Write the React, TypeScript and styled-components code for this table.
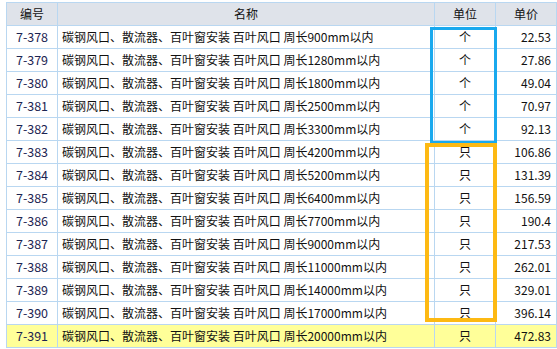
import React from 'react'
import styled, { createGlobalStyle } from 'styled-components'

const GlobalStyle = createGlobalStyle`
  body {
    margin: 0;
    background: #ffffff;
    font-family: 'Noto Sans CJK SC', 'Noto Sans', sans-serif;
  }
`

const Page = styled.div`
  width: 557px;
  height: 349px;
  padding: 2px 0 0 6px;
  box-sizing: border-box;
  overflow: hidden;
`

const Frame = styled.div`
  position: relative;
  width: 546px;
`

const Table = styled.table`
  border-collapse: collapse;
  table-layout: fixed;
  width: 546px;
  font-size: 12px;
`

const HeadCell = styled.th<{ $w: number }>`
  width: ${(p) => p.$w}px;
  height: 22px;
  padding: 0;
  background: #dfe3ea;
  border: 1px solid #b9d7f1;
  font-weight: 400;
  color: #111;
  text-align: center;
  line-height: 22px;
`

const Row = styled.tr<{ $hl?: boolean }>`
  background: ${(p) => (p.$hl ? '#ffff99' : '#ffffff')};
`

const Cell = styled.td<{ $align: 'left' | 'center' | 'right'; $code?: boolean }>`
  height: 22px;
  padding: 0 ${(p) => (p.$align === 'right' ? 5 : 4)}px;
  border: 1px solid #b9d7f1;
  text-align: ${(p) => p.$align};
  color: ${(p) => (p.$code ? '#1c2452' : '#111')};
  font-size: ${(p) => (p.$code ? 12.5 : 12)}px;
  line-height: 22px;
  white-space: nowrap;
  overflow: hidden;
`

const Mark = styled.div<{ $color: string; $w: number }>`
  position: absolute;
  box-sizing: border-box;
  border: ${(p) => p.$w}px solid ${(p) => p.$color};
  pointer-events: none;
`

const BlueMark = styled(Mark)`
  left: 424px;
  top: 25px;
  width: 67px;
  height: 117px;
`

const OrangeMark = styled(Mark)`
  left: 419px;
  top: 141px;
  width: 72px;
  height: 179px;
`

const rows: [string, string, string, string][] = [
  ['7-378', '900', '个', '22.53'],
  ['7-379', '1280', '个', '27.86'],
  ['7-380', '1800', '个', '49.04'],
  ['7-381', '2500', '个', '70.97'],
  ['7-382', '3300', '个', '92.13'],
  ['7-383', '4200', '只', '106.86'],
  ['7-384', '5200', '只', '131.39'],
  ['7-385', '6400', '只', '156.59'],
  ['7-386', '7700', '只', '190.4'],
  ['7-387', '9000', '只', '217.53'],
  ['7-388', '11000', '只', '262.01'],
  ['7-389', '14000', '只', '329.01'],
  ['7-390', '17000', '只', '396.14'],
  ['7-391', '20000', '只', '472.83'],
]

export default function App() {
  return (
    <Page>
      <GlobalStyle />
      <Frame>
        <Table>
          <thead>
            <tr>
              <HeadCell $w={50}>编号</HeadCell>
              <HeadCell $w={376}>名称</HeadCell>
              <HeadCell $w={60}>单位</HeadCell>
              <HeadCell $w={60}>单价</HeadCell>
            </tr>
          </thead>
          <tbody>
            {rows.map(([code, len, unit, price], i) => (
              <Row key={code} $hl={i === rows.length - 1}>
                <Cell $align="center" $code>{code}</Cell>
                <Cell $align="left">碳钢风口、散流器、百叶窗安装 百叶风口 周长{len}mm以内</Cell>
                <Cell $align="center">{unit}</Cell>
                <Cell $align="right">{price}</Cell>
              </Row>
            ))}
          </tbody>
        </Table>
        <BlueMark $color="#19a9ee" $w={3} />
        <OrangeMark $color="#fdb913" $w={4} />
      </Frame>
    </Page>
  )
}
